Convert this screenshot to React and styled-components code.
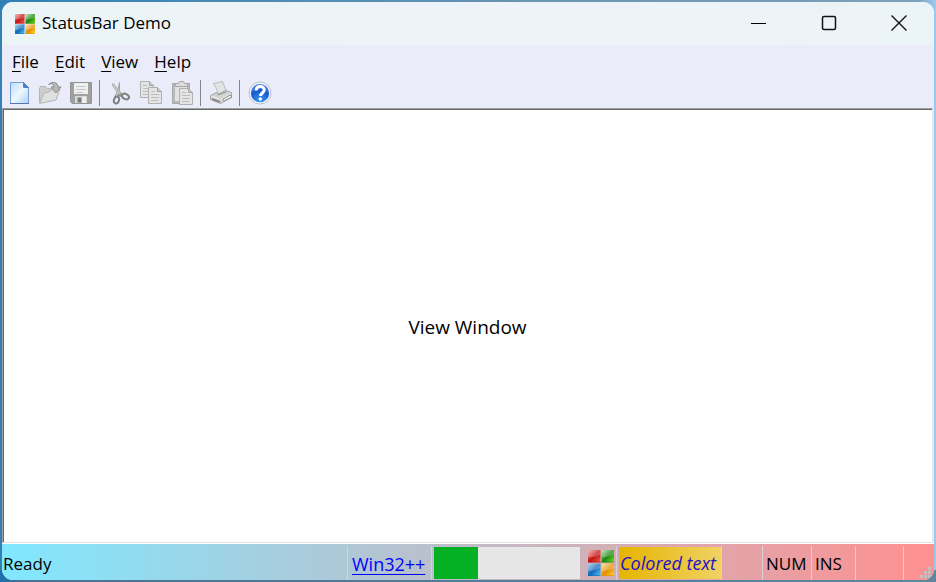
import React from "react";
import styled, { createGlobalStyle } from "styled-components";

const GlobalStyle = createGlobalStyle`
  * { box-sizing: border-box; }
  body {
    margin: 0;
    font-family: "Open Sans", "Noto Sans", sans-serif;
    font-size: 17px;
    line-height: 24px;
    color: #000;
  }
  button { font: inherit; color: inherit; border: 0; background: none; padding: 0; }
`;

const Desktop = styled.div`
  min-height: 100vh;
  display: flex;
  padding: 2px;
  background:
    linear-gradient(90deg, #1b6fae, #4a7292 20px, #5f87a0) bottom / 100% 12px no-repeat,
    linear-gradient(90deg, #3181b5, #6d96b2 60%, #7ba0ba 98%, #9ccbf0);
`;

const Window = styled.div`
  flex: 1;
  display: flex;
  flex-direction: column;
  min-width: 0;
  overflow: hidden;
  border-radius: 11px;
  background: #eaecfa;
`;

const TitleBar = styled.header`
  display: flex;
  align-items: center;
  height: 43px;
  padding-left: 13px;
  background: linear-gradient(90deg, #ebf4f7, #eef3f9 70%, #ebf4f7);
`;

const Title = styled.h1`
  flex: 1;
  margin: 0;
  padding: 0 0 2px 7px;
  font-size: 17px;
  font-weight: 400;
`;

const CaptionButton = styled.button`
  width: 70px;
  height: 41px;
  align-self: flex-start;
  display: grid;
  place-items: center;
`;

const MenuBar = styled.nav`
  display: flex;
  gap: 16px;
  height: 32px;
  align-items: center;
  padding: 2px 10px 0;
`;

const MenuButton = styled.button`
  u { text-underline-offset: 3px; text-decoration-thickness: 1px; }
`;

const ToolBar = styled.div`
  display: flex;
  align-items: center;
  height: 31px;
  padding-left: 1px;
`;

const ToolButton = styled.button`
  width: 31px;
  height: 31px;
  display: grid;
  place-items: center;
`;

const Separator = styled.span`
  width: 1px;
  height: 26px;
  margin: 0 4px 0 3px;
  background: #828389;
`;

const View = styled.main`
  flex: 1;
  display: grid;
  place-items: center;
  margin-right: 1px;
  padding-top: 2px;
  background: #fff;
  border: 1px solid;
  border-color: #a0a0a0 #e3e3e3 #e3e3e3 #a0a0a0;
  box-shadow: inset 1px 1px #696969;
  font-size: 19px;
`;

const StatusBar = styled.footer`
  display: flex;
  height: 37px;
  padding-top: 2px;
  border-top: 1px solid #fff;
  background: linear-gradient(90deg, #80e8ff, #ff9090) padding-box;
`;

const Pane = styled.div`
  position: relative;
  display: flex;
  align-items: center;
  flex: ${(p) => (p.$width ? `0 0 ${p.$width}px` : "1")};
  padding: ${(p) => p.$pad || "2px 1px 0"};
  white-space: nowrap;
  border-right: ${(p) => (p.$plain ? "0" : "1px solid #d8d2d8")};
`;

const PaneLink = styled.a`
  color: #00f;
  font-size: 18px;
  text-decoration: underline 1px #00f;
  text-underline-offset: 3px;
`;

const Progress = styled.progress`
  appearance: none;
  width: 100%;
  height: 32px;
  border: 0;
  background: #e6e6e6;
  &::-webkit-progress-bar { background: #e6e6e6; }
  &::-webkit-progress-value { background: #06b025; }
`;

const Colored = styled.em`
  flex: 1;
  height: 32px;
  padding: 4px 1px;
  font-size: 18px;
  color: #2310c8;
  background: linear-gradient(90deg, #e6b400, #f0d264);
`;

const Grip = styled.svg`
  position: absolute;
  right: 3px;
  bottom: 2px;
`;

function Logo({ size }) {
  const tiles = [
    ["r", 0, 0, "#f0a0a0", "#c41414", "#e86050"],
    ["g", 13, 0, "#a8d898", "#188810", "#80dc20"],
    ["b", 0, 13, "#8cc4ec", "#1268b8", "#58c8fa"],
    ["y", 13, 13, "#f8dc90", "#e48c00", "#fcd838"],
  ];
  return (
    <svg width={size} height={size} viewBox="0 0 25 25" aria-hidden="true">
      {tiles.map(([id, x, y, a, b, c]) => (
        <g key={id}>
          <linearGradient id={"tile-" + id + size} x1="0" y1="0" x2="1" y2="1">
            <stop offset="0" stopColor={a} />
            <stop offset=".5" stopColor={b} />
            <stop offset="1" stopColor={c} />
          </linearGradient>
          <rect x={x} y={y} width="12" height="12" fill={`url(#tile-${id}${size})`} />
          <path d={`M${x} ${y}h12v4q-5 3-12 3z`} fill="#fff" opacity=".25" />
          <path d={`M${x} ${y + 11.5}h12`} stroke={b} opacity=".6" />
        </g>
      ))}
    </svg>
  );
}

function Icon({ children }) {
  return (
    <svg width="24" height="24" viewBox="0 0 24 24" fill="none" aria-hidden="true">
      {children}
    </svg>
  );
}

const Sheet = ({ x, y }) => (
  <g transform={`translate(${x} ${y})`}>
    <path d="M.5.5h9l4 4v12H.5z" fill="#e4e4e4" stroke="#b0b0b0" />
    <path d="M9.500 .5v4h4" fill="#c8c8c8" stroke="#a4a4a4" />
    <path d="M3 4.500h4M3 7.500h8M3 10.500h8M3 13.500h7" stroke="#bdbdbd" />
  </g>
);

const NewIcon = () => (
  <Icon>
    <defs>
      <linearGradient id="new-page" x1="0" y1="0" x2="1" y2="1">
        <stop offset="0" stopColor="#b9dcfb" />
        <stop offset=".5" stopColor="#eef8ff" />
        <stop offset="1" stopColor="#a9d3f8" />
      </linearGradient>
    </defs>
    <path d="M3.500 1.500h13l5 5v16h-18z" fill="url(#new-page)" stroke="#7c9dd6" />
    <path d="M16.500 1.500v5h5z" fill="#4e80ce" stroke="#537cc2" />
    <path d="M3 22.500h19" stroke="#5876b4" />
  </Icon>
);

const OpenIcon = () => (
  <Icon>
    <path d="M1.500 21V7.500l1-2h5l2 2h8V12" fill="#cdcdcd" stroke="#b4b4b4" />
    <path d="M1.500 22.500 6 12l5-1 2-2 9-1-4 11z" fill="#e0e0e0" stroke="#b4b4b4" strokeLinejoin="round" />
    <path d="M10.500 3.500C14 0 20 1 20 6h3l-5 6-5-6h3c0-3-3-4-5.500-2.500z" fill="#b9b9b9" stroke="#8c8c8c" />
  </Icon>
);

const SaveIcon = () => (
  <Icon>
    <path d="M1.500 1.500h21v21H3l-1.500-2z" fill="#a0a0a0" stroke="#949494" />
    <path d="M5 2h14v11H5z" fill="#efefef" />
    <path d="M7 5.500h10M7 8.500h10M7 11.500h7" stroke="#c8c8c8" />
    <path d="M6 15h12v7H6z" fill="#d9d9d9" />
    <path d="M8.500 16.500h4v5h-4z" fill="#7c7c7c" />
    <path d="M13 16h4v6h-4z" fill="#eee" />
  </Icon>
);

const CutIcon = () => (
  <Icon>
    <path d="M4.500 4.500 13 16l2-2L5 2.500z" fill="#d5d5d5" stroke="#a4a4a4" />
    <path d="M11.500 1.500v8L9 16l-2-1 3-6z" fill="#ddd" stroke="#a4a4a4" />
    <ellipse cx="8.500" cy="19" rx="2.500" ry="3.500" transform="rotate(20 8.500 19)" stroke="#808080" strokeWidth="2" />
    <ellipse cx="17.500" cy="15.500" rx="3.700" ry="2.500" transform="rotate(30 17.500 15.500)" stroke="#808080" strokeWidth="2" />
    <path d="m10 15 4-2" stroke="#909090" strokeWidth="2" />
  </Icon>
);

const CopyIcon = () => (
  <Icon><Sheet x={1} y={0} /><Sheet x={9} y={6} /></Icon>
);

const PasteIcon = () => (
  <Icon>
    <path d="M2.500 2.500h17v20h-17z" fill="#bababa" stroke="#a8a8a8" />
    <path d="M5 5h12v15H5z" fill="#e2e2e2" />
    <path d="M5.500 5.500v-3h3l1-2h4l1 2h3v3z" fill="#dedede" stroke="#a4a4a4" />
    <Sheet x={9} y={7} />
  </Icon>
);

const PrintIcon = () => (
  <Icon>
    <path d="m4.500 2.500 9-2 4 10-9 4c1-5-2-8-4-12z" fill="#e4e4e4" stroke="#bababa" />
    <path d="m1.500 14.500 6-3 1 2 8-4 6 2v5l-11 6-10-4z" fill="#d3d3d3" stroke="#a6a6a6" strokeLinejoin="round" />
    <path d="m2 15 9.500 3.500L22 12" stroke="#eee" />
    <path d="m3 18 8 3" stroke="#8c8c8c" strokeWidth="2" />
    <path d="m14 18 7-4 2 2-8 4z" fill="#eee" stroke="#949494" />
    <path d="m9 14 8-3" stroke="#909090" />
  </Icon>
);

const HelpIcon = () => (
  <Icon>
    <defs>
      <radialGradient id="help-ball" cx=".5" cy=".9" r=".9">
        <stop offset="0" stopColor="#3b9cf4" />
        <stop offset=".6" stopColor="#1858cc" />
        <stop offset="1" stopColor="#6c9ce6" />
      </radialGradient>
    </defs>
    <circle cx="12" cy="12" r="11" fill="#f4f6fc" stroke="#b8bfd2" />
    <circle cx="12" cy="12" r="9.200" fill="url(#help-ball)" />
    <path d="M8.200 9.500C8.200 4 16.200 4.500 16.200 9c0 3-3.700 3-3.700 6" stroke="#fff" strokeWidth="3" />
    <circle cx="12.300" cy="18" r="1.700" fill="#fff" />
  </Icon>
);

const menus = ["File", "Edit", "View", "Help"];

const toolGroups = [
  [["New", NewIcon], ["Open", OpenIcon], ["Save", SaveIcon]],
  [["Cut", CutIcon], ["Copy", CopyIcon], ["Paste", PasteIcon]],
  [["Print", PrintIcon]],
  [["About", HelpIcon]],
];

export default function App() {
  return (
    <Desktop>
      <GlobalStyle />
      <Window>
        <TitleBar>
          <Logo size={20} />
          <Title>StatusBar Demo</Title>
          <CaptionButton aria-label="Minimize">
            <svg width="16" height="16"><path d="M0 8.500h15" stroke="#000" /></svg>
          </CaptionButton>
          <CaptionButton aria-label="Maximize">
            <svg width="16" height="16" fill="none">
              <rect x="1.500" y="1.500" width="13" height="13" rx="1.500" stroke="#111" strokeWidth="1.500" />
            </svg>
          </CaptionButton>
          <CaptionButton aria-label="Close">
            <svg width="16" height="16"><path d="m.5.5 15 15m0-15-15 15" stroke="#111" strokeWidth="1.400" /></svg>
          </CaptionButton>
        </TitleBar>
        <MenuBar>
          {menus.map((m) => (
            <MenuButton key={m}><u>{m[0]}</u>{m.slice(1)}</MenuButton>
          ))}
        </MenuBar>
        <ToolBar role="toolbar">
          {toolGroups.map((group, i) => (
            <React.Fragment key={i}>
              {i > 0 && <Separator />}
              {group.map(([name, Glyph]) => (
                <ToolButton key={name} aria-label={name}><Glyph /></ToolButton>
              ))}
            </React.Fragment>
          ))}
        </ToolBar>
        <View>View Window</View>
        <StatusBar>
          <Pane>Ready</Pane>
          <Pane $width={84} $pad="2px 4px 0"><PaneLink href="#win32">Win32++</PaneLink></Pane>
          <Pane $width={152} $pad="0 4px 0 2px" $plain>
            <Progress value={30} max={100} aria-label="Progress" />
          </Pane>
          <Pane $width={33} $pad="0 0 0 4px"><Logo size={26} /></Pane>
          <Pane $width={105} $pad="0 0 0 2px"><Colored>Colored text</Colored></Pane>
          <Pane $width={41} />
          <Pane $width={49} $pad="2px 3px 0">NUM</Pane>
          <Pane $width={44} $pad="2px 3px 0">INS</Pane>
          <Pane $width={48} />
          <Pane $width={30} $plain>
            <Grip width="11" height="11" fill="#c3c0c4" aria-hidden="true">
              <path d="M8 0h3v3H8zM8 4h3v3H8zM4 4h3v3H4zM8 8h3v3H8zM4 8h3v3H4zM0 8h3v3H0z" />
            </Grip>
          </Pane>
        </StatusBar>
      </Window>
    </Desktop>
  );
}
